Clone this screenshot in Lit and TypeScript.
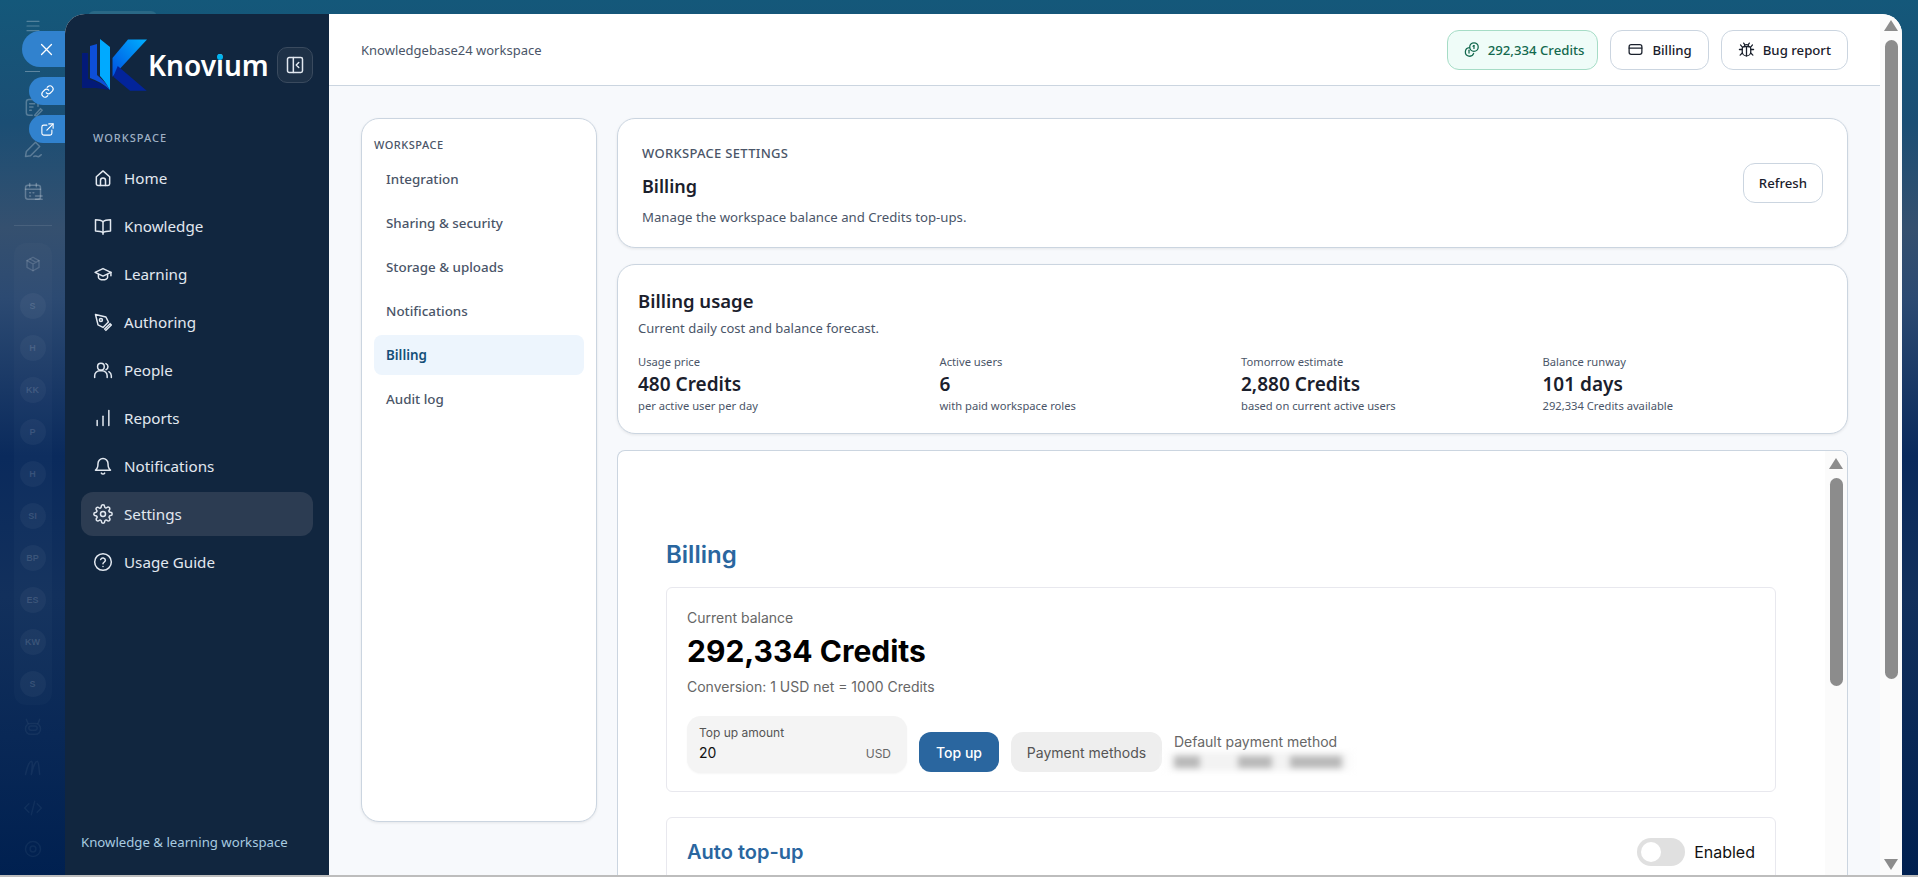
import { LitElement, css, html, svg } from "lit";
import { customElement } from "lit/decorators.js";

const icon = (body: unknown, size = 20) => html`<svg
  width=${size}
  height=${size}
  viewBox="0 0 24 24"
  fill="none"
  stroke="currentColor"
  stroke-width="1.8"
  stroke-linecap="round"
  stroke-linejoin="round"
>${body}</svg>`;

const icons = {
  home: svg`<path d="M4 10.5 12 3.5l8 7V19a2 2 0 0 1-2 2H6a2 2 0 0 1-2-2z"/><path d="M9 21v-6a3 3 0 0 1 6 0v6"/>`,
  book: svg`<path d="M12 7c-2-2-5-2.500-9-2.500V18c4 0 7 .5 9 2 2-1.500 5-2 9-2V4.500C17 4.500 14 5 12 7z"/><path d="M12 7v15"/>`,
  cap: svg`<path d="M2.500 10 12 5.500 21.500 10 12 14.500z"/><path d="M6.500 12.500V16c0 1.500 2.500 3 5.500 3s5.500-1.500 5.500-3v-3.500"/><path d="M21.500 10v4"/>`,
  pen: svg`<path d="M3 3l12.500 3 3 6-6.500 6.500-6-3z"/><circle cx="9.500" cy="9.500" r="1.800"/><path d="M14 20.500l6.500-6.500 1.500 1.500-6.500 6.500z"/>`,
  people: svg`<circle cx="9.500" cy="8" r="4"/><path d="M2 21v-2a6 6 0 0 1 6-6h3a6 6 0 0 1 6 6v2"/><path d="M15.500 4.300a4 4 0 0 1 0 7.400"/><path d="M19 14a6 6 0 0 1 3 5v2"/>`,
  bars: svg`<path d="M5 21v-6"/><path d="M12 21V10"/><path d="M19 21V3"/>`,
  bell: svg`<path d="M6 9a6 6 0 0 1 12 0c0 6 3 8 3 8H3s3-2 3-8z"/><path d="M10 20.500a2.300 2.300 0 0 0 4 0"/>`,
  gear: svg`<circle cx="12" cy="12" r="3"/><path d="M19.400 15a1.650 1.650 0 0 0 .33 1.820l.06.06a2 2 0 1 1-2.830 2.830l-.06-.06a1.650 1.650 0 0 0-2.800 1.170V21a2 2 0 1 1-4 0v-.09a1.650 1.650 0 0 0-2.800-1.170l-.06.06a2 2 0 1 1-2.830-2.830l.06-.06a1.650 1.650 0 0 0-1.170-2.800H3a2 2 0 1 1 0-4h.09a1.650 1.650 0 0 0 1.170-2.800l-.06-.06a2 2 0 1 1 2.830-2.830l.06.06a1.650 1.650 0 0 0 2.800-1.170V3a2 2 0 1 1 4 0v.09a1.650 1.650 0 0 0 2.800 1.170l.06-.06a2 2 0 1 1 2.830 2.830l-.06.06a1.650 1.650 0 0 0 1.170 2.800H21a2 2 0 1 1 0 4h-.09a1.650 1.650 0 0 0-1.510 1.110z"/>`,
  help: svg`<circle cx="12" cy="12" r="10"/><path d="M9.200 9a3 3 0 0 1 5.700 1c0 2-2.900 2.500-2.900 4"/><path d="M12 17.500h.01"/>`,
  coins: svg`<circle cx="15.500" cy="8.500" r="6"/><path d="M15.500 6.500v4"/><path d="M14.300 7.500l1.200-1"/><path d="M9 9.500a6 6 0 1 0 6 8"/><path d="M8.500 13v4"/>`,
  card: svg`<rect x="3" y="5" width="18" height="14" rx="3"/><path d="M3 10h18"/>`,
  bug: svg`<path d="M8 8h8a3 3 0 0 1 2 3v4a6 6 0 0 1-12 0v-4a3 3 0 0 1 2-3z"/><path d="M9 8a3 3 0 0 1 6 0"/><path d="M12 8v13"/><path d="M6 12H2M22 12h-4M6 17l-3 3M18 17l3 3M6.500 9 3.500 5.500M17.500 9l3-3.500M9.500 5 8 3M14.500 5 16 3"/>`,
  collapse: svg`<rect x="3" y="3" width="18" height="18" rx="2"/><path d="M10 3v18"/><path d="M16.500 9l-3 3 3 3"/>`,
  close: svg`<path d="M5 5l14 14M19 5 5 19"/>`,
  link: svg`<path d="M10 14a5 5 0 0 0 7 0l3-3a5 5 0 0 0-7-7l-1.500 1.500"/><path d="M14 10a5 5 0 0 0-7 0l-3 3a5 5 0 0 0 7 7l1.500-1.500"/>`,
  external: svg`<path d="M19 13v5a3 3 0 0 1-3 3H6a3 3 0 0 1-3-3V8a3 3 0 0 1 3-3h5"/><path d="M14 3h7v7"/><path d="M21 3l-10 10"/>`,
  doc: svg`<path d="M18 11V6a3 3 0 0 0-3-3H7a3 3 0 0 0-3 3v13a3 3 0 0 0 3 3h4"/><path d="M8 8h6M8 12h4M8 16h2"/><path d="M14 22l7-8 2 2-7 7z"/>`,
  sign: svg`<path d="M3 21l1-6L15 4l5 5L9 20z"/><path d="M13 21c2-2 4 1 6 0s2-2 3-2"/>`,
  cal: svg`<rect x="3" y="5" width="18" height="17" rx="3"/><path d="M3 10h18M8 3v4M16 3v4M8 14h1M12 14h1M8 18h1"/><path d="M15 18h8M15 22h8"/>`,
  cube: svg`<path d="M12 3l8 4.500v9L12 21l-8-4.500v-9z"/><path d="M4 7.500l8 4.500 8-4.500M12 12v9M8 5.300l8 4.500"/>`,
  robot: svg`<rect x="3" y="9" width="18" height="13" rx="6"/><rect x="7" y="12" width="10" height="5" rx="2.500"/><path d="M6 9 4 4M18 9l2-5"/>`,
  wave: svg`<path d="M3 21C5 12 8 5 10 5s1 8 0 16M10 21c2-9 5-16 7-16s2 8 3 16M16 21"/>`,
  code: svg`<path d="M7 7l-5 5 5 5M17 7l5 5-5 5M14 4l-4 16"/>`,
  ring: svg`<circle cx="12" cy="12" r="9"/><circle cx="12" cy="12" r="3.500"/>`,
};

const navItems = [
  ["Home", icons.home],
  ["Knowledge", icons.book],
  ["Learning", icons.cap],
  ["Authoring", icons.pen],
  ["People", icons.people],
  ["Reports", icons.bars],
  ["Notifications", icons.bell],
  ["Settings", icons.gear],
  ["Usage Guide", icons.help],
] as const;

const settingsItems = [
  "Integration",
  "Sharing & security",
  "Storage & uploads",
  "Notifications",
  "Billing",
  "Audit log",
];

const usageStats = [
  ["Usage price", "480 Credits", "per active user per day"],
  ["Active users", "6", "with paid workspace roles"],
  ["Tomorrow estimate", "2,880 Credits", "based on current active users"],
  ["Balance runway", "101 days", "292,334 Credits available"],
];

const avatars = ["S", "H", "KK", "P", "H", "SI", "BP", "ES", "KW", "S"];

@customElement("app-root")
export class AppRoot extends LitElement {
  static styles = css`
    :host {
      display: flex;
      position: relative;
      width: 1918px;
      height: 877px;
      overflow: hidden;
      font-family: "Noto Sans", sans-serif;
      color: #1a202c;
      background:
        linear-gradient(180deg, #14587a 0%, #1b4e74 14%, #35506f 26%, #2c4a72 34%, #0a2a5c 52%, #12305c 68%, #002050 100%);
    }
    * {
      box-sizing: border-box;
    }
    svg {
      display: block;
      flex: none;
    }

    .rail {
      width: 65px;
      flex: none;
      display: flex;
      flex-direction: column;
      align-items: center;
      padding-top: 18px;
      color: rgba(226, 232, 240, 0.3);
    }
    .rail-icon {
      height: 42px;
      display: flex;
      align-items: center;
      justify-content: center;
    }
    .rail-top {
      height: 68px;
    }
    .rail-top-rule {
      width: 15px;
      height: 1px;
      margin-top: 37px;
      background: rgba(226, 232, 240, 0.35);
    }
    .rail-rule {
      width: 38px;
      height: 1px;
      margin: 13px 0 17px;
      background: rgba(255, 255, 255, 0.1);
    }
    .rail-group {
      width: 38px;
      display: flex;
      flex-direction: column;
      align-items: center;
      gap: 16px;
      padding: 8px 0;
      border-radius: 12px;
      background: rgba(255, 255, 255, 0.02);
    }
    .rail-avatar {
      width: 26px;
      height: 26px;
      border-radius: 50%;
      display: flex;
      align-items: center;
      justify-content: center;
      background: rgba(255, 255, 255, 0.04);
      font: 700 9px "Liberation Sans", sans-serif;
      color: rgba(226, 232, 240, 0.16);
    }
    .rail-cube {
      height: 26px;
      display: flex;
      align-items: center;
      color: rgba(226, 232, 240, 0.18);
    }
    .rail-faint {
      height: 41px;
      display: flex;
      align-items: center;
      color: rgba(226, 232, 240, 0.06);
    }

    .floaters {
      position: absolute;
      left: 0;
      top: 0;
      width: 65px;
    }
    .float {
      position: absolute;
      right: 0;
      display: flex;
      align-items: center;
      color: #fff;
      background: #3182ce;
    }
    .float-close {
      top: 31px;
      left: 22px;
      width: 43px;
      height: 36px;
      padding-left: 16px;
      border-radius: 18px 0 0 18px;
    }
    .float-link {
      left: 29px;
      width: 36px;
      height: 28px;
      padding-left: 11px;
      border-radius: 14px 0 0 14px;
    }
    .top-link {
      top: 77px;
    }
    .top-ext {
      top: 115px;
    }
    .peek {
      position: absolute;
      left: 88px;
      top: 11px;
      width: 69px;
      height: 6px;
      border-radius: 8px 8px 0 0;
      background: #2a6886;
    }
    .baseline {
      position: absolute;
      left: 0;
      right: 0;
      bottom: 0;
      height: 2px;
      background: #bdbdbd;
    }

    .window {
      position: relative;
      margin-top: 14px;
      width: 1837px;
      height: 861px;
      display: flex;
      overflow: hidden;
      border-radius: 20px 20px 0 0;
      background: #fbfbfb;
    }

    .sidebar {
      width: 264px;
      flex: none;
      display: flex;
      flex-direction: column;
      padding: 25px 16px 24px;
      background: #11263f;
      color: #e2e8f0;
    }
    .brand {
      position: relative;
      display: flex;
      align-items: center;
      height: 52px;
      padding-left: 1px;
    }
    .brand-name {
      margin-left: 0;
      font: 600 28px/1 "Noto Sans", sans-serif;
      color: #fff;
      flex: 1;
    }
    .brand-dot {
      position: absolute;
      left: 136px;
      top: 15px;
      width: 6px;
      height: 6px;
      border-radius: 50%;
      background: #00b4f0;
    }
    .collapse {
      width: 36px;
      height: 36px;
      display: flex;
      align-items: center;
      justify-content: center;
      border-radius: 10px;
      border: 1px solid #3a4a5e;
      background: #1e3147;
    }
    .side-label {
      margin: 39px 0 10px 12px;
      font-size: 11px;
      line-height: 16px;
      font-weight: 500;
      letter-spacing: 1px;
      color: #9fb0c4;
    }
    .side-nav {
      display: flex;
      flex-direction: column;
      gap: 4px;
    }
    .side-item {
      height: 44px;
      display: flex;
      align-items: center;
      gap: 11px;
      padding-left: 12px;
      border-radius: 12px;
      font-size: 15.2px;
    }
    .side-item.on {
      background: #2c3c52;
    }
    .side-foot {
      margin-top: auto;
      font-size: 13.2px;
      line-height: 18px;
      color: #a8cbe0;
    }

    .main {
      flex: 1;
      min-width: 0;
      display: flex;
      flex-direction: column;
      background: #f7f9fc;
    }
    .topbar {
      height: 72px;
      flex: none;
      display: flex;
      align-items: center;
      gap: 12px;
      padding: 0 32px;
      background: #fff;
      border-bottom: 1px solid #cbd5e0;
    }
    .workspace-name {
      flex: 1;
      font-size: 13px;
      color: #4a5568;
    }
    .btn {
      height: 40px;
      display: flex;
      align-items: center;
      gap: 8px;
      padding: 0 16px;
      border: 1px solid #cbd5e0;
      border-radius: 12px;
      background: #fff;
      font-size: 13.2px;
      font-weight: 500;
      color: #1a202c;
    }
    .btn.credits {
      padding: 0 13px 0 15px;
      background: #effcf8;
      border-color: #a6dcc6;
      color: #13694e;
    }
    .btn.slim {
      padding: 0 15px;
    }

    .body {
      flex: 1;
      min-height: 0;
      display: grid;
      grid-template-columns: 236px 1fr;
      gap: 20px;
      padding: 32px 32px 0;
    }
    .settings-nav {
      height: 704px;
      padding: 10px 12px 0;
      background: #fff;
      border: 1px solid #cbd5e0;
      border-radius: 18px;
      box-shadow: 0 1px 3px rgba(0, 0, 0, 0.08);
    }
    .settings-label {
      height: 30px;
      display: flex;
      align-items: center;
      padding-top: 1px;
      font-size: 11px;
      letter-spacing: 0.5px;
      font-weight: 500;
      color: #4a5568;
    }
    .settings-list {
      display: flex;
      flex-direction: column;
      gap: 4px;
    }
    .settings-item {
      height: 40px;
      display: flex;
      align-items: center;
      padding-left: 12px;
      border-radius: 8px;
      font-size: 13.4px;
      font-weight: 500;
      color: #4a5568;
    }
    .settings-item.on {
      background: #edf5fd;
      color: #144f78;
      font-weight: 600;
    }

    .stack {
      min-width: 0;
      display: flex;
      flex-direction: column;
      gap: 16px;
    }
    .panel {
      background: #fff;
      border: 1px solid #cbd5e0;
      border-radius: 18px;
      box-shadow: 0 1px 3px rgba(0, 0, 0, 0.08);
    }
    .head-panel {
      height: 130px;
      display: flex;
      align-items: center;
      justify-content: space-between;
      padding: 0 24px;
    }
    .head-text {
      align-self: flex-start;
      padding-top: 25px;
    }
    .eyebrow {
      font-size: 13px;
      font-weight: 500;
      line-height: 18px;
      letter-spacing: 0.3px;
      color: #4a5568;
    }
    .head-title {
      margin-top: 11px;
      font-size: 18px;
      line-height: 26px;
      font-weight: 600;
      color: #1a202c;
    }
    .head-sub {
      margin-top: 9px;
      font-size: 13.2px;
      line-height: 18px;
      color: #4a5568;
    }
    .usage-panel {
      height: 170px;
      padding: 22px 20px 0;
    }
    .usage-title {
      font-size: 18.5px;
      line-height: 28px;
      font-weight: 600;
    }
    .usage-sub {
      font-size: 13px;
      line-height: 18px;
      margin-top: 4px;
      color: #4a5568;
    }
    .usage-grid {
      display: grid;
      grid-template-columns: repeat(4, 301.500px);
      margin-top: 17px;
    }
    .stat-label,
    .stat-note {
      font-size: 11.2px;
      line-height: 16px;
      color: #4a5568;
    }
    .stat-value {
      font-size: 19px;
      line-height: 28px;
      font-weight: 600;
    }

    .frame {
      flex: 1;
      min-height: 0;
      display: flex;
      overflow: hidden;
      border-radius: 8px 8px 0 0;
      border-bottom: none;
      box-shadow: none;
      font-family: Inter, sans-serif;
    }
    .frame-scroll {
      flex: 1;
      min-width: 0;
      padding: 86px 49px 0 48px;
      overflow: hidden;
    }
    .page-title {
      margin: 0;
      font-size: 24px;
      line-height: 36px;
      font-weight: 600;
      color: #2a669f;
    }
    .box {
      margin-top: 14px;
      padding: 20px;
      border: 1px solid #e8e8ee;
      border-radius: 6px;
      background: #fff;
    }
    .balance {
      height: 205px;
    }
    .balance-label {
      font-size: 14px;
      line-height: 20px;
      color: #666;
    }
    .balance-value {
      margin-top: 3px;
      font-size: 30px;
      line-height: 40px;
      font-weight: 700;
      color: #000;
    }
    .balance-note {
      margin-top: 6px;
      font-size: 14px;
      line-height: 20px;
      color: #666;
    }
    .topup {
      display: flex;
      align-items: flex-end;
      gap: 12px;
      margin-top: 19px;
    }
    .field {
      width: 220px;
      height: 57px;
      padding: 8px 12px;
      border-radius: 14px;
      background: #f4f4f4;
      box-shadow: 0 1px 2px rgba(0, 0, 0, 0.04);
    }
    .field-label {
      font-size: 12px;
      line-height: 18px;
      color: #555;
    }
    .field-row {
      display: flex;
      justify-content: space-between;
      align-items: baseline;
      padding-right: 4px;
      font-size: 14px;
      line-height: 22px;
      color: #111;
    }
    .field-unit {
      font-size: 12px;
      color: #666;
    }
    .pill {
      height: 40px;
      margin-bottom: 1px;
      display: flex;
      align-items: center;
      justify-content: center;
      border-radius: 12px;
      font-size: 14px;
      font-weight: 500;
    }
    .pill.primary {
      width: 80px;
      background: #2a669f;
      color: #fff;
    }
    .pill.muted {
      width: 151px;
      background: #eeeeee;
      color: #555;
      font-weight: 400;
    }
    .method {
      height: 40px;
      margin-bottom: 1px;
      font-size: 14px;
      line-height: 20px;
      color: #666;
    }
    .method-blur {
      display: flex;
      width: 190px;
      height: 19px;
      margin-left: -10px;
      padding: 4px 0 0 10px;
      background: linear-gradient(90deg, #fff, #f3f3f3 8%, #f3f3f3 92%, #fff);
      filter: blur(3px);
    }
    .method-blur i {
      display: block;
      height: 12px;
      background: #b8b8b8;
    }
    .method-blur i:nth-child(1) {
      width: 26px;
      margin-right: 38px;
    }
    .method-blur i:nth-child(2) {
      width: 34px;
      margin-right: 18px;
    }
    .method-blur i:nth-child(3) {
      width: 52px;
    }
    .auto {
      margin-top: 25px;
      height: 120px;
      display: flex;
      align-items: flex-start;
      justify-content: space-between;
      padding-top: 20px;
    }
    .auto-title {
      font-size: 20px;
      line-height: 28px;
      font-weight: 600;
      color: #2a669f;
    }
    .auto-toggle {
      display: flex;
      align-items: center;
      gap: 9px;
      font-size: 16px;
      color: #111;
    }
    .switch {
      width: 48px;
      height: 28px;
      padding: 4px;
      border-radius: 14px;
      background: #e0e0e0;
    }
    .switch i {
      display: block;
      width: 20px;
      height: 20px;
      border-radius: 50%;
      background: #fff;
    }

    .scrollbar {
      width: 22px;
      flex: none;
      display: flex;
      flex-direction: column;
      align-items: center;
      background: #fbfbfb;
    }
    .arrow {
      width: 0;
      height: 0;
      border-left: 7px solid transparent;
      border-right: 7px solid transparent;
      flex: none;
    }
    .arrow.up {
      border-bottom: 11px solid #8c8c8c;
    }
    .arrow.down {
      border-top: 11px solid #8c8c8c;
    }
    .thumb {
      width: 13px;
      border-radius: 7px;
      background: #8c8c8c;
      flex: none;
    }
    .outer-bar {
      padding-top: 6px;
    }
    .outer-bar .thumb {
      height: 639px;
      margin: 9px 0 180px;
    }
    .inner-bar {
      padding-top: 7px;
    }
    .inner-bar .thumb {
      height: 208px;
      margin-top: 9px;
    }
  `;

  render() {
    return html`
      <div class="rail">
        <div class="rail-top">
          ${icon(svg`<path d="M3 5h18M3 12h18M3 19h18"/>`, 16)}
          <div class="rail-top-rule"></div>
        </div>
        <div class="rail-icon">${icon(icons.doc, 20)}</div>
        <div class="rail-icon">${icon(icons.sign, 20)}</div>
        <div class="rail-icon">${icon(icons.cal, 20)}</div>
        <div class="rail-rule"></div>
        <div class="rail-group">
          <div class="rail-cube">${icon(icons.cube, 18)}</div>
          ${avatars.map((a) => html`<div class="rail-avatar">${a}</div>`)}
        </div>
        <div class="rail-faint">${icon(icons.robot, 20)}</div>
        <div class="rail-faint">${icon(icons.wave, 20)}</div>
        <div class="rail-faint">${icon(icons.code, 20)}</div>
        <div class="rail-faint">${icon(icons.ring, 20)}</div>
      </div>

      <div class="peek"></div>

      <div class="window">
        <aside class="sidebar">
          <div class="brand">
            ${this.renderLogo()}
            <span class="brand-name">Knovium</span>
            <i class="brand-dot"></i>
            <div class="collapse">${icon(icons.collapse, 20)}</div>
          </div>
          <div class="side-label">WORKSPACE</div>
          <nav class="side-nav">
            ${navItems.map(
              ([label, glyph]) => html`<div class="side-item ${label === "Settings" ? "on" : ""}">
                ${icon(glyph, 20)}<span>${label}</span>
              </div>`
            )}
          </nav>
          <div class="side-foot">Knowledge &amp; learning workspace</div>
        </aside>

        <div class="main">
          <header class="topbar">
            <div class="workspace-name">Knowledgebase24 workspace</div>
            <div class="btn credits">${icon(icons.coins, 17)}292,334 Credits</div>
            <div class="btn">${icon(icons.card, 17)}Billing</div>
            <div class="btn">${icon(icons.bug, 17)}Bug report</div>
          </header>

          <div class="body">
            <nav class="settings-nav">
              <div class="settings-label">WORKSPACE</div>
              <div class="settings-list">
                ${settingsItems.map(
                  (s) => html`<div class="settings-item ${s === "Billing" ? "on" : ""}">${s}</div>`
                )}
              </div>
            </nav>

            <div class="stack">
              <section class="panel head-panel">
                <div class="head-text">
                  <div class="eyebrow">WORKSPACE SETTINGS</div>
                  <div class="head-title">Billing</div>
                  <div class="head-sub">Manage the workspace balance and Credits top-ups.</div>
                </div>
                <div class="btn slim">Refresh</div>
              </section>

              <section class="panel usage-panel">
                <div class="usage-title">Billing usage</div>
                <div class="usage-sub">Current daily cost and balance forecast.</div>
                <div class="usage-grid">
                  ${usageStats.map(
                    ([label, value, note]) => html`<div>
                      <div class="stat-label">${label}</div>
                      <div class="stat-value">${value}</div>
                      <div class="stat-note">${note}</div>
                    </div>`
                  )}
                </div>
              </section>

              <section class="panel frame">
                <div class="frame-scroll">
                  <h1 class="page-title">Billing</h1>
                  <div class="box balance">
                    <div class="balance-label">Current balance</div>
                    <div class="balance-value">292,334 Credits</div>
                    <div class="balance-note">Conversion: 1 USD net = 1000 Credits</div>
                    <div class="topup">
                      <div class="field">
                        <div class="field-label">Top up amount</div>
                        <div class="field-row"><span>20</span><span class="field-unit">USD</span></div>
                      </div>
                      <div class="pill primary">Top up</div>
                      <div class="pill muted">Payment methods</div>
                      <div class="method">
                        <div>Default payment method</div>
                        <div class="method-blur"><i></i><i></i><i></i></div>
                      </div>
                    </div>
                  </div>
                  <div class="box auto">
                    <div class="auto-title">Auto top-up</div>
                    <div class="auto-toggle">
                      <div class="switch"><i></i></div>
                      Enabled
                    </div>
                  </div>
                </div>
                <div class="scrollbar inner-bar">
                  <div class="arrow up"></div>
                  <div class="thumb"></div>
                </div>
              </section>
            </div>
          </div>
        </div>

        <div class="scrollbar outer-bar">
          <div class="arrow up"></div>
          <div class="thumb"></div>
          <div class="arrow down"></div>
        </div>
      </div>

      <div class="floaters">
        <div class="float float-close">${icon(icons.close, 17)}</div>
        <div class="float float-link top-link">${icon(icons.link, 15)}</div>
        <div class="float float-link top-ext">${icon(icons.external, 15)}</div>
      </div>

      <div class="baseline"></div>
    `;
  }

  renderLogo() {
    return html`<svg width="66" height="52" viewBox="0 0 66 52">
      <defs>
        <linearGradient id="kv-a" x1="1" y1="0" x2="0" y2="1">
          <stop offset="0" stop-color="#00b0ff" />
          <stop offset="1" stop-color="#0050e0" />
        </linearGradient>
      </defs>
      <path d="M0 14H6V40C14 42 22 46 28 51L14 49H0z" fill="#031a78" />
      <path d="M8 7 15 5V36C20 40 25 45 28 51 22 45 14 41 8 39z" fill="#0d4fd8" />
      <path d="M18 0 28 8V51C24 44 21 40 18 37z" fill="#00aaff" />
      <path d="M30.500 19 46 .5H65L30.500 37.700z" fill="url(#kv-a)" />
      <path d="M35.700 27 64.700 51.700H48L31.300 37.700z" fill="#03249a" />
    </svg>`;
  }
}
